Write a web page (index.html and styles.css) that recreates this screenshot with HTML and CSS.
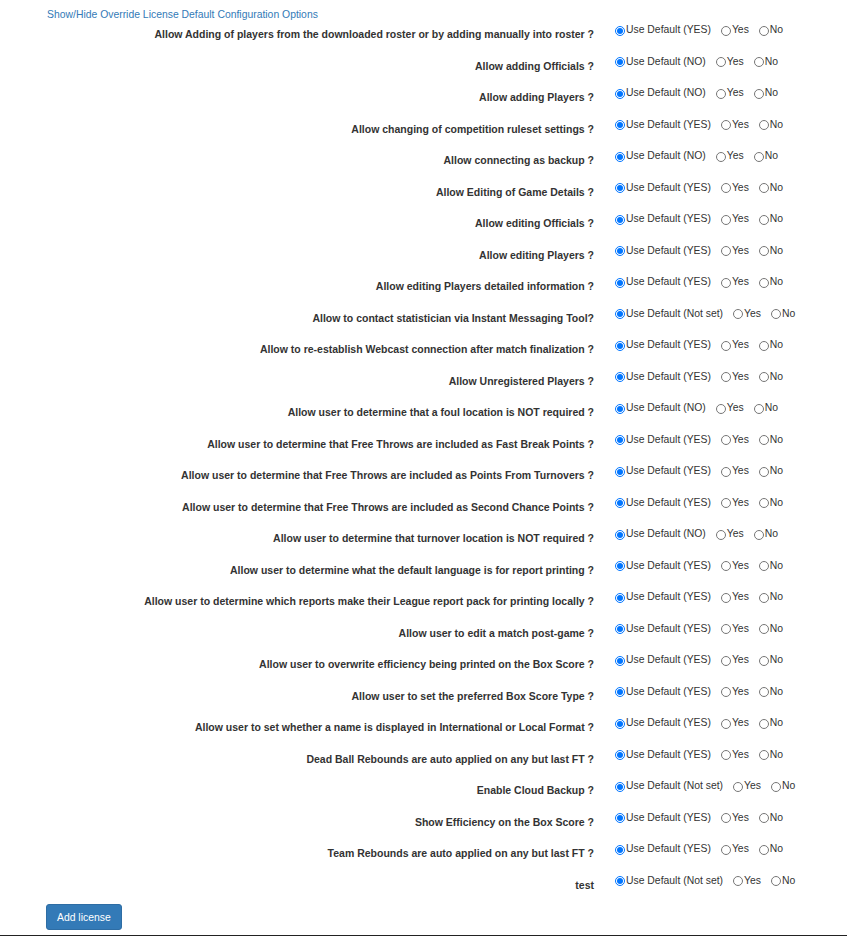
FILE: index.html
```html
<!DOCTYPE html>
<html lang="en">
<head>
    <meta charset="UTF-8">
    <title>License Options</title>
    <link rel="stylesheet" href="styles.css">
</head>
<body>
    <div class="page">
        <a class="toggle" href="#">Show/Hide Override License Default Configuration Options</a>
        <form class="options">
            <div class="row">
                <label class="ctl-label">Allow Adding of players from the downloaded roster or by adding manually into roster ?</label>
                <div class="choices">
                    <label class="opt"><input type="radio" name="o1" checked>Use Default (YES)</label>
                    <label class="opt"><input type="radio" name="o1">Yes</label>
                    <label class="opt"><input type="radio" name="o1">No</label>
                </div>
            </div>
            <div class="row">
                <label class="ctl-label">Allow adding Officials ?</label>
                <div class="choices">
                    <label class="opt"><input type="radio" name="o2" checked>Use Default (NO)</label>
                    <label class="opt"><input type="radio" name="o2">Yes</label>
                    <label class="opt"><input type="radio" name="o2">No</label>
                </div>
            </div>
            <div class="row">
                <label class="ctl-label">Allow adding Players ?</label>
                <div class="choices">
                    <label class="opt"><input type="radio" name="o3" checked>Use Default (NO)</label>
                    <label class="opt"><input type="radio" name="o3">Yes</label>
                    <label class="opt"><input type="radio" name="o3">No</label>
                </div>
            </div>
            <div class="row">
                <label class="ctl-label">Allow changing of competition ruleset settings ?</label>
                <div class="choices">
                    <label class="opt"><input type="radio" name="o4" checked>Use Default (YES)</label>
                    <label class="opt"><input type="radio" name="o4">Yes</label>
                    <label class="opt"><input type="radio" name="o4">No</label>
                </div>
            </div>
            <div class="row">
                <label class="ctl-label">Allow connecting as backup ?</label>
                <div class="choices">
                    <label class="opt"><input type="radio" name="o5" checked>Use Default (NO)</label>
                    <label class="opt"><input type="radio" name="o5">Yes</label>
                    <label class="opt"><input type="radio" name="o5">No</label>
                </div>
            </div>
            <div class="row">
                <label class="ctl-label">Allow Editing of Game Details ?</label>
                <div class="choices">
                    <label class="opt"><input type="radio" name="o6" checked>Use Default (YES)</label>
                    <label class="opt"><input type="radio" name="o6">Yes</label>
                    <label class="opt"><input type="radio" name="o6">No</label>
                </div>
            </div>
            <div class="row">
                <label class="ctl-label">Allow editing Officials ?</label>
                <div class="choices">
                    <label class="opt"><input type="radio" name="o7" checked>Use Default (YES)</label>
                    <label class="opt"><input type="radio" name="o7">Yes</label>
                    <label class="opt"><input type="radio" name="o7">No</label>
                </div>
            </div>
            <div class="row">
                <label class="ctl-label">Allow editing Players ?</label>
                <div class="choices">
                    <label class="opt"><input type="radio" name="o8" checked>Use Default (YES)</label>
                    <label class="opt"><input type="radio" name="o8">Yes</label>
                    <label class="opt"><input type="radio" name="o8">No</label>
                </div>
            </div>
            <div class="row">
                <label class="ctl-label">Allow editing Players detailed information ?</label>
                <div class="choices">
                    <label class="opt"><input type="radio" name="o9" checked>Use Default (YES)</label>
                    <label class="opt"><input type="radio" name="o9">Yes</label>
                    <label class="opt"><input type="radio" name="o9">No</label>
                </div>
            </div>
            <div class="row">
                <label class="ctl-label">Allow to contact statistician via Instant Messaging Tool?</label>
                <div class="choices">
                    <label class="opt"><input type="radio" name="o10" checked>Use Default (Not set)</label>
                    <label class="opt"><input type="radio" name="o10">Yes</label>
                    <label class="opt"><input type="radio" name="o10">No</label>
                </div>
            </div>
            <div class="row">
                <label class="ctl-label">Allow to re-establish Webcast connection after match finalization ?</label>
                <div class="choices">
                    <label class="opt"><input type="radio" name="o11" checked>Use Default (YES)</label>
                    <label class="opt"><input type="radio" name="o11">Yes</label>
                    <label class="opt"><input type="radio" name="o11">No</label>
                </div>
            </div>
            <div class="row">
                <label class="ctl-label">Allow Unregistered Players ?</label>
                <div class="choices">
                    <label class="opt"><input type="radio" name="o12" checked>Use Default (YES)</label>
                    <label class="opt"><input type="radio" name="o12">Yes</label>
                    <label class="opt"><input type="radio" name="o12">No</label>
                </div>
            </div>
            <div class="row">
                <label class="ctl-label">Allow user to determine that a foul location is NOT required ?</label>
                <div class="choices">
                    <label class="opt"><input type="radio" name="o13" checked>Use Default (NO)</label>
                    <label class="opt"><input type="radio" name="o13">Yes</label>
                    <label class="opt"><input type="radio" name="o13">No</label>
                </div>
            </div>
            <div class="row">
                <label class="ctl-label">Allow user to determine that Free Throws are included as Fast Break Points ?</label>
                <div class="choices">
                    <label class="opt"><input type="radio" name="o14" checked>Use Default (YES)</label>
                    <label class="opt"><input type="radio" name="o14">Yes</label>
                    <label class="opt"><input type="radio" name="o14">No</label>
                </div>
            </div>
            <div class="row">
                <label class="ctl-label">Allow user to determine that Free Throws are included as Points From Turnovers ?</label>
                <div class="choices">
                    <label class="opt"><input type="radio" name="o15" checked>Use Default (YES)</label>
                    <label class="opt"><input type="radio" name="o15">Yes</label>
                    <label class="opt"><input type="radio" name="o15">No</label>
                </div>
            </div>
            <div class="row">
                <label class="ctl-label">Allow user to determine that Free Throws are included as Second Chance Points ?</label>
                <div class="choices">
                    <label class="opt"><input type="radio" name="o16" checked>Use Default (YES)</label>
                    <label class="opt"><input type="radio" name="o16">Yes</label>
                    <label class="opt"><input type="radio" name="o16">No</label>
                </div>
            </div>
            <div class="row">
                <label class="ctl-label">Allow user to determine that turnover location is NOT required ?</label>
                <div class="choices">
                    <label class="opt"><input type="radio" name="o17" checked>Use Default (NO)</label>
                    <label class="opt"><input type="radio" name="o17">Yes</label>
                    <label class="opt"><input type="radio" name="o17">No</label>
                </div>
            </div>
            <div class="row">
                <label class="ctl-label">Allow user to determine what the default language is for report printing ?</label>
                <div class="choices">
                    <label class="opt"><input type="radio" name="o18" checked>Use Default (YES)</label>
                    <label class="opt"><input type="radio" name="o18">Yes</label>
                    <label class="opt"><input type="radio" name="o18">No</label>
                </div>
            </div>
            <div class="row">
                <label class="ctl-label">Allow user to determine which reports make their League report pack for printing locally ?</label>
                <div class="choices">
                    <label class="opt"><input type="radio" name="o19" checked>Use Default (YES)</label>
                    <label class="opt"><input type="radio" name="o19">Yes</label>
                    <label class="opt"><input type="radio" name="o19">No</label>
                </div>
            </div>
            <div class="row">
                <label class="ctl-label">Allow user to edit a match post-game ?</label>
                <div class="choices">
                    <label class="opt"><input type="radio" name="o20" checked>Use Default (YES)</label>
                    <label class="opt"><input type="radio" name="o20">Yes</label>
                    <label class="opt"><input type="radio" name="o20">No</label>
                </div>
            </div>
            <div class="row">
                <label class="ctl-label">Allow user to overwrite efficiency being printed on the Box Score ?</label>
                <div class="choices">
                    <label class="opt"><input type="radio" name="o21" checked>Use Default (YES)</label>
                    <label class="opt"><input type="radio" name="o21">Yes</label>
                    <label class="opt"><input type="radio" name="o21">No</label>
                </div>
            </div>
            <div class="row">
                <label class="ctl-label">Allow user to set the preferred Box Score Type ?</label>
                <div class="choices">
                    <label class="opt"><input type="radio" name="o22" checked>Use Default (YES)</label>
                    <label class="opt"><input type="radio" name="o22">Yes</label>
                    <label class="opt"><input type="radio" name="o22">No</label>
                </div>
            </div>
            <div class="row">
                <label class="ctl-label">Allow user to set whether a name is displayed in International or Local Format ?</label>
                <div class="choices">
                    <label class="opt"><input type="radio" name="o23" checked>Use Default (YES)</label>
                    <label class="opt"><input type="radio" name="o23">Yes</label>
                    <label class="opt"><input type="radio" name="o23">No</label>
                </div>
            </div>
            <div class="row">
                <label class="ctl-label">Dead Ball Rebounds are auto applied on any but last FT ?</label>
                <div class="choices">
                    <label class="opt"><input type="radio" name="o24" checked>Use Default (YES)</label>
                    <label class="opt"><input type="radio" name="o24">Yes</label>
                    <label class="opt"><input type="radio" name="o24">No</label>
                </div>
            </div>
            <div class="row">
                <label class="ctl-label">Enable Cloud Backup ?</label>
                <div class="choices">
                    <label class="opt"><input type="radio" name="o25" checked>Use Default (Not set)</label>
                    <label class="opt"><input type="radio" name="o25">Yes</label>
                    <label class="opt"><input type="radio" name="o25">No</label>
                </div>
            </div>
            <div class="row">
                <label class="ctl-label">Show Efficiency on the Box Score ?</label>
                <div class="choices">
                    <label class="opt"><input type="radio" name="o26" checked>Use Default (YES)</label>
                    <label class="opt"><input type="radio" name="o26">Yes</label>
                    <label class="opt"><input type="radio" name="o26">No</label>
                </div>
            </div>
            <div class="row">
                <label class="ctl-label">Team Rebounds are auto applied on any but last FT ?</label>
                <div class="choices">
                    <label class="opt"><input type="radio" name="o27" checked>Use Default (YES)</label>
                    <label class="opt"><input type="radio" name="o27">Yes</label>
                    <label class="opt"><input type="radio" name="o27">No</label>
                </div>
            </div>
            <div class="row">
                <label class="ctl-label">test</label>
                <div class="choices">
                    <label class="opt"><input type="radio" name="o28" checked>Use Default (Not set)</label>
                    <label class="opt"><input type="radio" name="o28">Yes</label>
                    <label class="opt"><input type="radio" name="o28">No</label>
                </div>
            </div>
            <button type="button" class="btn-add">Add license</button>
        </form>
    </div>
    <div class="footer">&copy; Copyright Genius Sports Group 2017. All rights reserved.</div>
</body>
</html>
```

FILE: styles.css
```css
* {
    margin: 0;
    padding: 0;
    box-sizing: border-box;
}
body {
    font-family: "Liberation Sans", Arial, sans-serif;
    color: #333;
    background: #fff;
}
.page {
    padding: 8px 0 0 47px;
}
.toggle {
    display: block;
    height: 14px;
    font-size: 10.4px;
    line-height: 14px;
    color: #337ab7;
    text-decoration: none;
}
.row {
    display: grid;
    grid-template-columns: 547px 1fr;
    column-gap: 21px;
    height: 31.5px;
}
.ctl-label {
    text-align: right;
    font-size: 10.5px;
    font-weight: bold;
    line-height: 14px;
    padding-top: 5px;
    white-space: nowrap;
}
.choices {
    display: flex;
    align-items: center;
    height: 15px;
    padding-top: 1px;
    font-size: 10.4px;
    line-height: 14px;
}
.opt {
    display: flex;
    align-items: center;
    margin-right: 10px;
    white-space: nowrap;
}
.opt input {
    width: 10px;
    height: 10px;
    margin: 1px 1px 0 0;
}
.btn-add {
    display: block;
    height: 26px;
    padding: 0 10px;
    margin-left: -1px;
    font-family: "Liberation Sans", Arial, sans-serif;
    font-size: 10.4px;
    color: #fff;
    background-color: #337ab7;
    border: 1px solid #2e6da4;
    border-radius: 3px;
    cursor: pointer;
}
.footer {
    margin-top: 5px;
    height: 40px;
    background: #3a3a3a;
    border-top: 1px solid #222;
    color: #ccc;
    font-size: 10px;
    text-align: center;
    padding-top: 1px;
}
```
